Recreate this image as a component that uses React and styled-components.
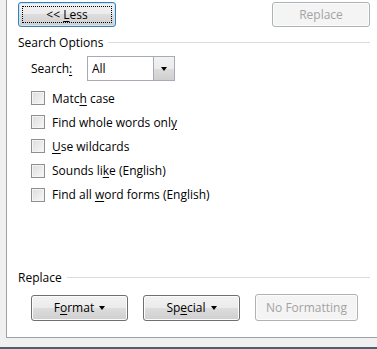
import React from "react";
import styled, { createGlobalStyle } from "styled-components";

const Global = createGlobalStyle`
  html, body { margin: 0; padding: 0; }
  body { font-family: "Open Sans", "Segoe UI", sans-serif; font-size: 12px; color: #000; }
`;

const Frame = styled.div`
  width: 377px;
  height: 349px;
  background: #f0f0f0;
  display: flex;
  flex-direction: column;
  overflow: hidden;
`;

const Panel = styled.div`
  margin-left: 6px;
  height: 338px;
  box-sizing: border-box;
  background: #fff;
  border-left: 1px solid #a0a0a0;
  border-bottom: 1px solid #a0a0a0;
  display: flex;
  flex-direction: column;
  padding: 2px 7px 16px 11px;
`;

const BottomStrip = styled.div`
  margin-top: auto;
  height: 2px;
  background: #4e5f70;
`;

const TopRow = styled.div`
  display: flex;
  justify-content: space-between;
  align-items: center;
  height: 25px;
`;

const Button = styled.button`
  position: relative;
  box-sizing: border-box;
  width: ${(p) => p.$w || 98}px;
  height: ${(p) => p.$h || 25}px;
  padding: 0;
  font-family: inherit;
  font-size: 12px;
  border-radius: 3px;
  display: flex;
  align-items: center;
  justify-content: center;
  gap: 5px;
  color: ${(p) => (p.disabled ? "#a3a3a3" : "#000")};
  border: 1px solid ${(p) => (p.disabled ? "#adb2b5" : p.$focus ? "#3c7fb1" : "#707070")};
  background: ${(p) =>
    p.disabled
      ? "#f4f4f4"
      : "linear-gradient(#f2f2f2 0%, #ebebeb 50%, #dddddd 50%, #cfcfcf 100%)"};
  box-shadow: ${(p) => (p.$focus ? "inset 0 0 0 1px #c8e6f8" : "inset 0 0 0 1px #fcfcfc")};
  cursor: default;
`;

const FocusRing = styled.span`
  position: absolute;
  inset: 3px;
  border: 1px dotted #000;
  pointer-events: none;
`;

const Arrow = styled.span`
  display: inline-block;
  width: 0;
  height: 0;
  border-left: 3.5px solid transparent;
  border-right: 3.5px solid transparent;
  border-top: 4px solid #000;
`;

const SectionHeader = styled.div`
  display: flex;
  align-items: center;
  gap: 5px;
  height: 18px;
  margin-top: ${(p) => p.$mt || 0}px;
  &::after {
    content: "";
    flex: 1;
    height: 1px;
    background: #dcdcdc;
  }
`;

const Indent = styled.div`
  padding-left: 13px;
  display: flex;
  flex-direction: column;
`;

const SearchRow = styled.div`
  display: flex;
  align-items: center;
  margin-top: 5px;
  height: 25px;
`;

const Label = styled.span`
  width: 56px;
`;

const Select = styled.div`
  box-sizing: border-box;
  width: 88px;
  height: 25px;
  border: 1px solid #a5acb5;
  display: flex;
  align-items: stretch;
`;

const SelectValue = styled.span`
  flex: 1;
  display: flex;
  align-items: center;
  padding-left: 4px;
`;

const DropButton = styled.span`
  width: 20px;
  display: flex;
  align-items: center;
  justify-content: center;
  border-left: 1px solid #a5acb5;
  background: linear-gradient(#f2f2f2 0%, #ebebeb 50%, #dddddd 50%, #cfcfcf 100%);
`;

const CheckList = styled.div`
  display: flex;
  flex-direction: column;
  margin-top: 5px;
`;

const CheckRow = styled.label`
  display: flex;
  align-items: center;
  gap: 7px;
  height: 24.2px;
`;

const Box = styled.span`
  box-sizing: border-box;
  width: 14px;
  height: 14px;
  border: 1px solid #8e8f8f;
  background: linear-gradient(135deg, #dcdcdc, #f8f8f8);
  box-shadow: inset 0 0 0 1px #f4f4f4;
`;

const BottomSection = styled.div`
  margin-top: auto;
  display: flex;
  flex-direction: column;
`;

const ButtonRow = styled.div`
  display: flex;
  align-items: center;
  gap: 15px;
  margin-top: 8px;
  padding-left: 13px;
`;

const U = styled.u`
  text-underline-offset: 2px;
`;

const checks = [
  <>Matc<U>h</U> case</>,
  <>Find whole words onl<U>y</U></>,
  <><U>U</U>se wildcards</>,
  <>Sounds li<U>k</U>e (English)</>,
  <>Find all <U>w</U>ord forms (English)</>,
];

export default function App() {
  return (
    <>
      <Global />
      <Frame>
        <Panel>
          <TopRow>
            <Button $focus $w={98}>
              <FocusRing />
              <span>&lt;&lt; <U>L</U>ess</span>
            </Button>
            <Button disabled $w={98}>Replace</Button>
          </TopRow>
          <SectionHeader $mt={6}>Search Options</SectionHeader>
          <Indent>
            <SearchRow>
              <Label>Search<U>:</U></Label>
              <Select>
                <SelectValue>All</SelectValue>
                <DropButton><Arrow /></DropButton>
              </Select>
            </SearchRow>
            <CheckList>
              {checks.map((c, i) => (
                <CheckRow key={i}>
                  <Box />
                  <span>{c}</span>
                </CheckRow>
              ))}
            </CheckList>
          </Indent>
          <BottomSection>
            <SectionHeader>Replace</SectionHeader>
            <ButtonRow>
              <Button $w={97} $h={26}><span>F<U>o</U>rmat</span><Arrow /></Button>
              <Button $w={97} $h={26}><span>Sp<U>e</U>cial</span><Arrow /></Button>
              <Button disabled $w={103} $h={27}>No Formatting</Button>
            </ButtonRow>
          </BottomSection>
        </Panel>
        <BottomStrip />
      </Frame>
    </>
  );
}
